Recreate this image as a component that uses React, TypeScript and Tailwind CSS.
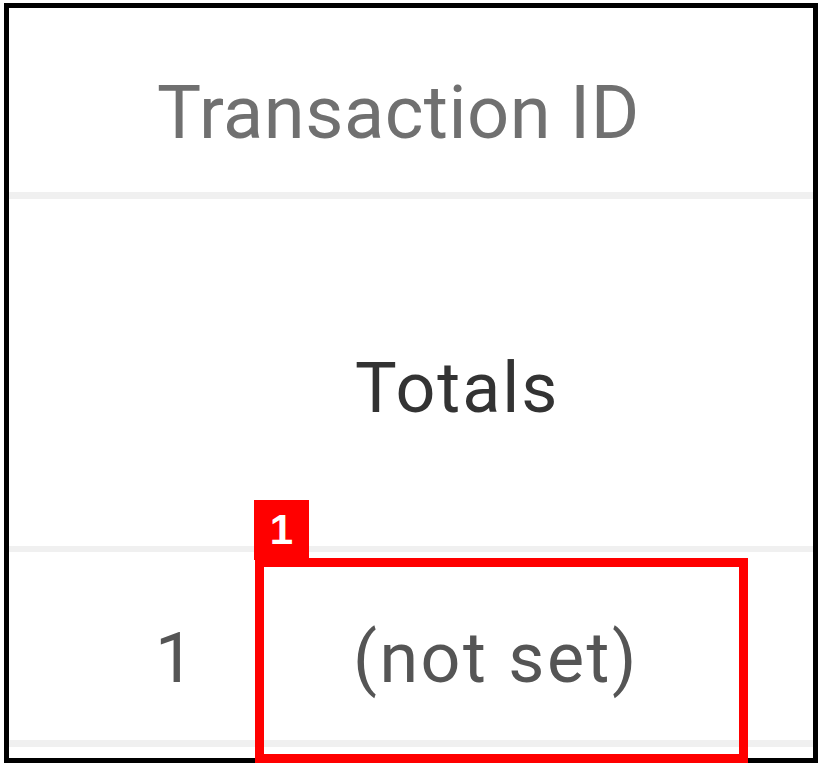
import React from "react";

export default function App() {
  const font = { fontFamily: "Roboto, 'Liberation Sans', sans-serif" };
  return (
    <div className="relative w-[820px] h-[765px] bg-white overflow-hidden" style={font}>
      <div className="absolute left-[4px] top-[3px] w-[814px] h-[760px] border-[5px] border-black flex flex-col">
        {/* Header row */}
        <div className="h-[184px] shrink-0 pl-[148px] pt-[68px]">
          <span className="block text-[74px] leading-none tracking-[0.5px] text-[#707070] whitespace-nowrap">Transaction ID</span>
        </div>
        <div className="h-[7px] shrink-0 bg-[#f0f0f0]" />
        {/* Totals row */}
        <div className="h-[347px] shrink-0 pl-[346px] pt-[154px]">
          <span className="block text-[70px] leading-none tracking-[2px] text-[#333333] whitespace-nowrap">Totals</span>
        </div>
        <div className="h-[6px] shrink-0 bg-[#f0f0f0]" />
        {/* Data row */}
        <div className="h-[188px] shrink-0 flex pt-[71px]">
          <span className="block w-[344px] pl-[146px] text-[70px] leading-none text-[#555555]">1</span>
          <span className="block text-[70px] leading-none tracking-[2.5px] text-[#555555] whitespace-nowrap">(not set)</span>
        </div>
        <div className="h-[7px] shrink-0 bg-[#f0f0f0]" />
      </div>
      {/* Annotation */}
      <div className="absolute left-[255px] top-[558px] w-[493px] h-[205px] border-[9px] border-[#ff0000]" />
      <div className="absolute left-[254px] top-[500px] w-[55px] h-[60px] bg-[#ff0000] flex items-center justify-center">
        <span className="text-white font-bold text-[42px] leading-none" style={{ fontFamily: "Arial, 'Liberation Sans', sans-serif" }}>1</span>
      </div>
    </div>
  );
}
